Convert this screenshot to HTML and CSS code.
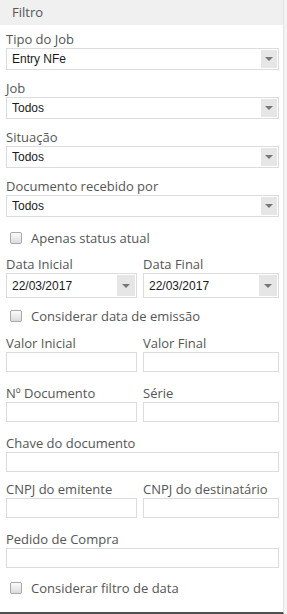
FILE: index.html
```html
<!DOCTYPE html>
<html lang="pt">
<head>
    <meta charset="UTF-8">
    <title>Filtro</title>
    <link rel="stylesheet" href="styles.css">
</head>
<body>
    <div class="panel">
        <div class="panel-head">Filtro</div>
        <div class="panel-body">
            <div class="field">
                <label>Tipo do Job</label>
                <div class="select"><span>Entry NFe</span><i class="arrow"></i></div>
            </div>
            <div class="field">
                <label>Job</label>
                <div class="select"><span>Todos</span><i class="arrow"></i></div>
            </div>
            <div class="field">
                <label>Situação</label>
                <div class="select"><span>Todos</span><i class="arrow"></i></div>
            </div>
            <div class="field">
                <label>Documento recebido por</label>
                <div class="select"><span>Todos</span><i class="arrow"></i></div>
            </div>

            <div class="check"><i class="box"></i>Apenas status atual</div>

            <div class="row row-dates">
                <div class="field">
                    <label>Data Inicial</label>
                    <div class="select date"><span>22/03/2017</span><i class="arrow"></i></div>
                </div>
                <div class="field">
                    <label>Data Final</label>
                    <div class="select date"><span>22/03/2017</span><i class="arrow"></i></div>
                </div>
            </div>

            <div class="check"><i class="box"></i>Considerar data de emissão</div>

            <div class="row row-first">
                <div class="field">
                    <label>Valor Inicial</label>
                    <div class="input"></div>
                </div>
                <div class="field">
                    <label>Valor Final</label>
                    <div class="input"></div>
                </div>
            </div>
            <div class="row">
                <div class="field">
                    <label>Nº Documento</label>
                    <div class="input"></div>
                </div>
                <div class="field">
                    <label>Série</label>
                    <div class="input"></div>
                </div>
            </div>
            <div class="field wide">
                <label>Chave do documento</label>
                <div class="input"></div>
            </div>
            <div class="row">
                <div class="field">
                    <label>CNPJ do emitente</label>
                    <div class="input"></div>
                </div>
                <div class="field">
                    <label>CNPJ do destinatário</label>
                    <div class="input"></div>
                </div>
            </div>
            <div class="field wide">
                <label>Pedido de Compra</label>
                <div class="input"></div>
            </div>

            <div class="check check-last"><i class="box"></i>Considerar filtro de data</div>
        </div>
    </div>
</body>
</html>
```

FILE: styles.css
```css
body {
    margin: 0;
    background-color: #f4f4f4;
    font-family: "Open Sans", Arial, sans-serif;
    font-size: 13px;
    color: #555;
}
.panel {
    width: 283px;
    height: 612px;
    background-color: #fff;
    border-right: 1px solid #e2e2e2;
    border-bottom: 2px solid #505050;
}
.panel-head {
    height: 25px;
    line-height: 25px;
    padding-left: 12px;
    background-color: #f0f0f0;
    color: #555;
}
.panel-body {
    padding: 6px 4px 0 6px;
}
.field {
    margin-bottom: 10px;
}
.field label {
    display: block;
    line-height: 17px;
    color: #555;
    white-space: nowrap;
}
.select {
    height: 20px;
    border: 1px solid #dcdcdc;
    display: flex;
    align-items: center;
    font-family: "Liberation Sans", Arial, sans-serif;
    font-size: 12px;
    color: #1a1a1a;
}
.select span {
    flex: 1;
    padding-left: 5px;
}
.select .arrow {
    width: 16px;
    height: 18px;
    margin-right: 1px;
    background-color: #e6e6e6;
    display: flex;
    align-items: center;
    justify-content: center;
}
.select .arrow::after {
    content: "";
    border-left: 4px solid transparent;
    border-right: 4px solid transparent;
    border-top: 4px solid #777;
}
.select.date {
    height: 23px;
}
.select.date .arrow {
    width: 18px;
    height: 21px;
}
.check {
    display: flex;
    align-items: center;
    height: 22px;
    padding-left: 4px;
}
.check .box {
    width: 10px;
    height: 10px;
    margin-right: 9px;
    border: 1px solid #a9a9a9;
    border-radius: 2px;
    background: linear-gradient(#fcfcfc, #dcdcdc);
}
.row {
    display: grid;
    grid-template-columns: 131px 1fr;
    gap: 6px;
}
.input {
    height: 18px;
    border: 1px solid #dcdcdc;
}
.row .field {
    margin-bottom: 13px;
}
.wide {
    margin-bottom: 9px;
}
.row-dates {
    margin-top: 7px;
}
.row-dates .field {
    margin-bottom: 7px;
}
.row-first {
    margin-top: 8px;
}
.check-last {
    margin-top: 1px;
}
```
